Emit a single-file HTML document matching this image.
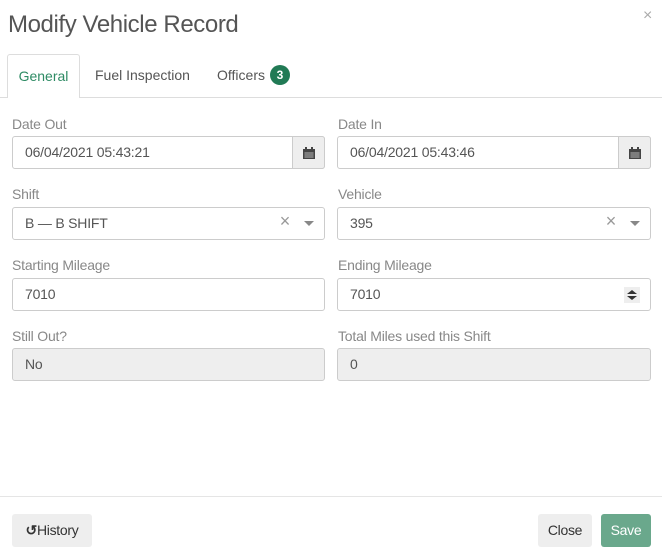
<!DOCTYPE html><html><head><style>
*{box-sizing:border-box}body{margin:0;width:662px;height:558px;background:#fff;font-family:"Liberation Sans",sans-serif;position:relative;overflow:hidden;color:#555}
.a{position:absolute}
.lbl{position:absolute;font-size:14px;color:#888;letter-spacing:-0.2px}
.in{position:absolute;height:33px;border:1px solid #ccc;border-radius:3px;font-size:14px;color:#555;padding:8px 12px;line-height:15px;background:#fff;letter-spacing:-0.2px}
.dis{background:#eee}
.cal{position:absolute;top:-1px;right:-1px;width:33px;height:33px;background:#eee;border:1px solid #ccc;border-radius:0 3px 3px 0}
.x{position:absolute;top:6px;font-size:18px;color:#999}
.car{position:absolute;top:13px;width:0;height:0;border-left:5px solid transparent;border-right:5px solid transparent;border-top:5px solid #888}
.btn{position:absolute;height:33px;border-radius:3px;font-size:14px;line-height:33px;text-align:center;letter-spacing:-0.3px}
</style></head><body>
<div class="a" style="left:8px;top:11px;font-size:24px;color:#555;letter-spacing:-0.4px">Modify Vehicle Record</div>
<div class="a" style="left:643px;top:7px;font-size:16px;color:#aaa">×</div>
<div class="a" style="left:0;top:97px;width:662px;height:1px;background:#ddd"></div>
<div class="a" style="left:7px;top:54px;width:73px;height:44px;border:1px solid #ddd;border-bottom:none;border-radius:3px 3px 0 0;background:#fff;color:#2e8b64;font-size:14px;text-align:center;line-height:42px">General</div>
<div class="a" style="left:95px;top:67px;font-size:14px;color:#555">Fuel Inspection</div>
<div class="a" style="left:217px;top:67px;font-size:14px;color:#555">Officers</div>
<div class="a" style="left:270px;top:65px;width:20px;height:20px;border-radius:10px;background:#217a55;color:#fff;font-size:12px;font-weight:bold;text-align:center;line-height:20px">3</div>

<div class="lbl" style="left:12px;top:116px">Date Out</div>
<div class="in" style="left:12px;top:136px;width:313px">06/04/2021 05:43:21<div class="cal"><svg width="12" height="12" style="margin:10px" viewBox="0 0 12 12"><rect x="0" y="2" width="12" height="10" fill="#444"/><rect x="2" y="0" width="2" height="3" fill="#444"/><rect x="8" y="0" width="2" height="3" fill="#444"/><path d="M1 6h10M1 8h10M1 10h10M3 5v6M5 5v6M7 5v6M9 5v6" stroke="#bbb" stroke-width=".6"/></svg></div></div>
<div class="lbl" style="left:338px;top:116px">Date In</div>
<div class="in" style="left:337px;top:136px;width:314px">06/04/2021 05:43:46<div class="cal"><svg width="12" height="12" style="margin:10px" viewBox="0 0 12 12"><rect x="0" y="2" width="12" height="10" fill="#444"/><rect x="2" y="0" width="2" height="3" fill="#444"/><rect x="8" y="0" width="2" height="3" fill="#444"/><path d="M1 6h10M1 8h10M1 10h10M3 5v6M5 5v6M7 5v6M9 5v6" stroke="#bbb" stroke-width=".6"/></svg></div></div>

<div class="lbl" style="left:12px;top:186px">Shift</div>
<div class="in" style="left:12px;top:207px;width:313px">B — B SHIFT<span class="x" style="right:34px">×</span><span class="car" style="right:10px"></span></div>
<div class="lbl" style="left:338px;top:186px">Vehicle</div>
<div class="in" style="left:337px;top:207px;width:314px">395<span class="x" style="right:34px">×</span><span class="car" style="right:10px"></span></div>

<div class="lbl" style="left:12px;top:257px">Starting Mileage</div>
<div class="in" style="left:12px;top:278px;width:313px">7010</div>
<div class="lbl" style="left:338px;top:257px">Ending Mileage</div>
<div class="in" style="left:337px;top:278px;width:314px">7010<div class="a" style="right:10px;top:8px;width:16px;height:16px;background:#eee"><div class="a" style="left:3px;top:3px;border-left:5px solid transparent;border-right:5px solid transparent;border-bottom:4px solid #333"></div><div class="a" style="left:3px;top:9px;border-left:5px solid transparent;border-right:5px solid transparent;border-top:4px solid #333"></div></div></div>

<div class="lbl" style="left:12px;top:328px">Still Out?</div>
<div class="in dis" style="left:12px;top:348px;width:313px">No</div>
<div class="lbl" style="left:338px;top:328px">Total Miles used this Shift</div>
<div class="in dis" style="left:337px;top:348px;width:314px">0</div>

<div class="a" style="left:0;top:496px;width:662px;height:1px;background:#e5e5e5"></div>
<div class="btn" style="left:12px;top:514px;width:80px;background:#eee;color:#333"><b>↺</b>History</div>
<div class="btn" style="left:538px;top:514px;width:54px;background:#eee;color:#333">Close</div>
<div class="btn" style="left:601px;top:514px;width:50px;background:#6aa88c;color:#fff">Save</div>
</body></html>
